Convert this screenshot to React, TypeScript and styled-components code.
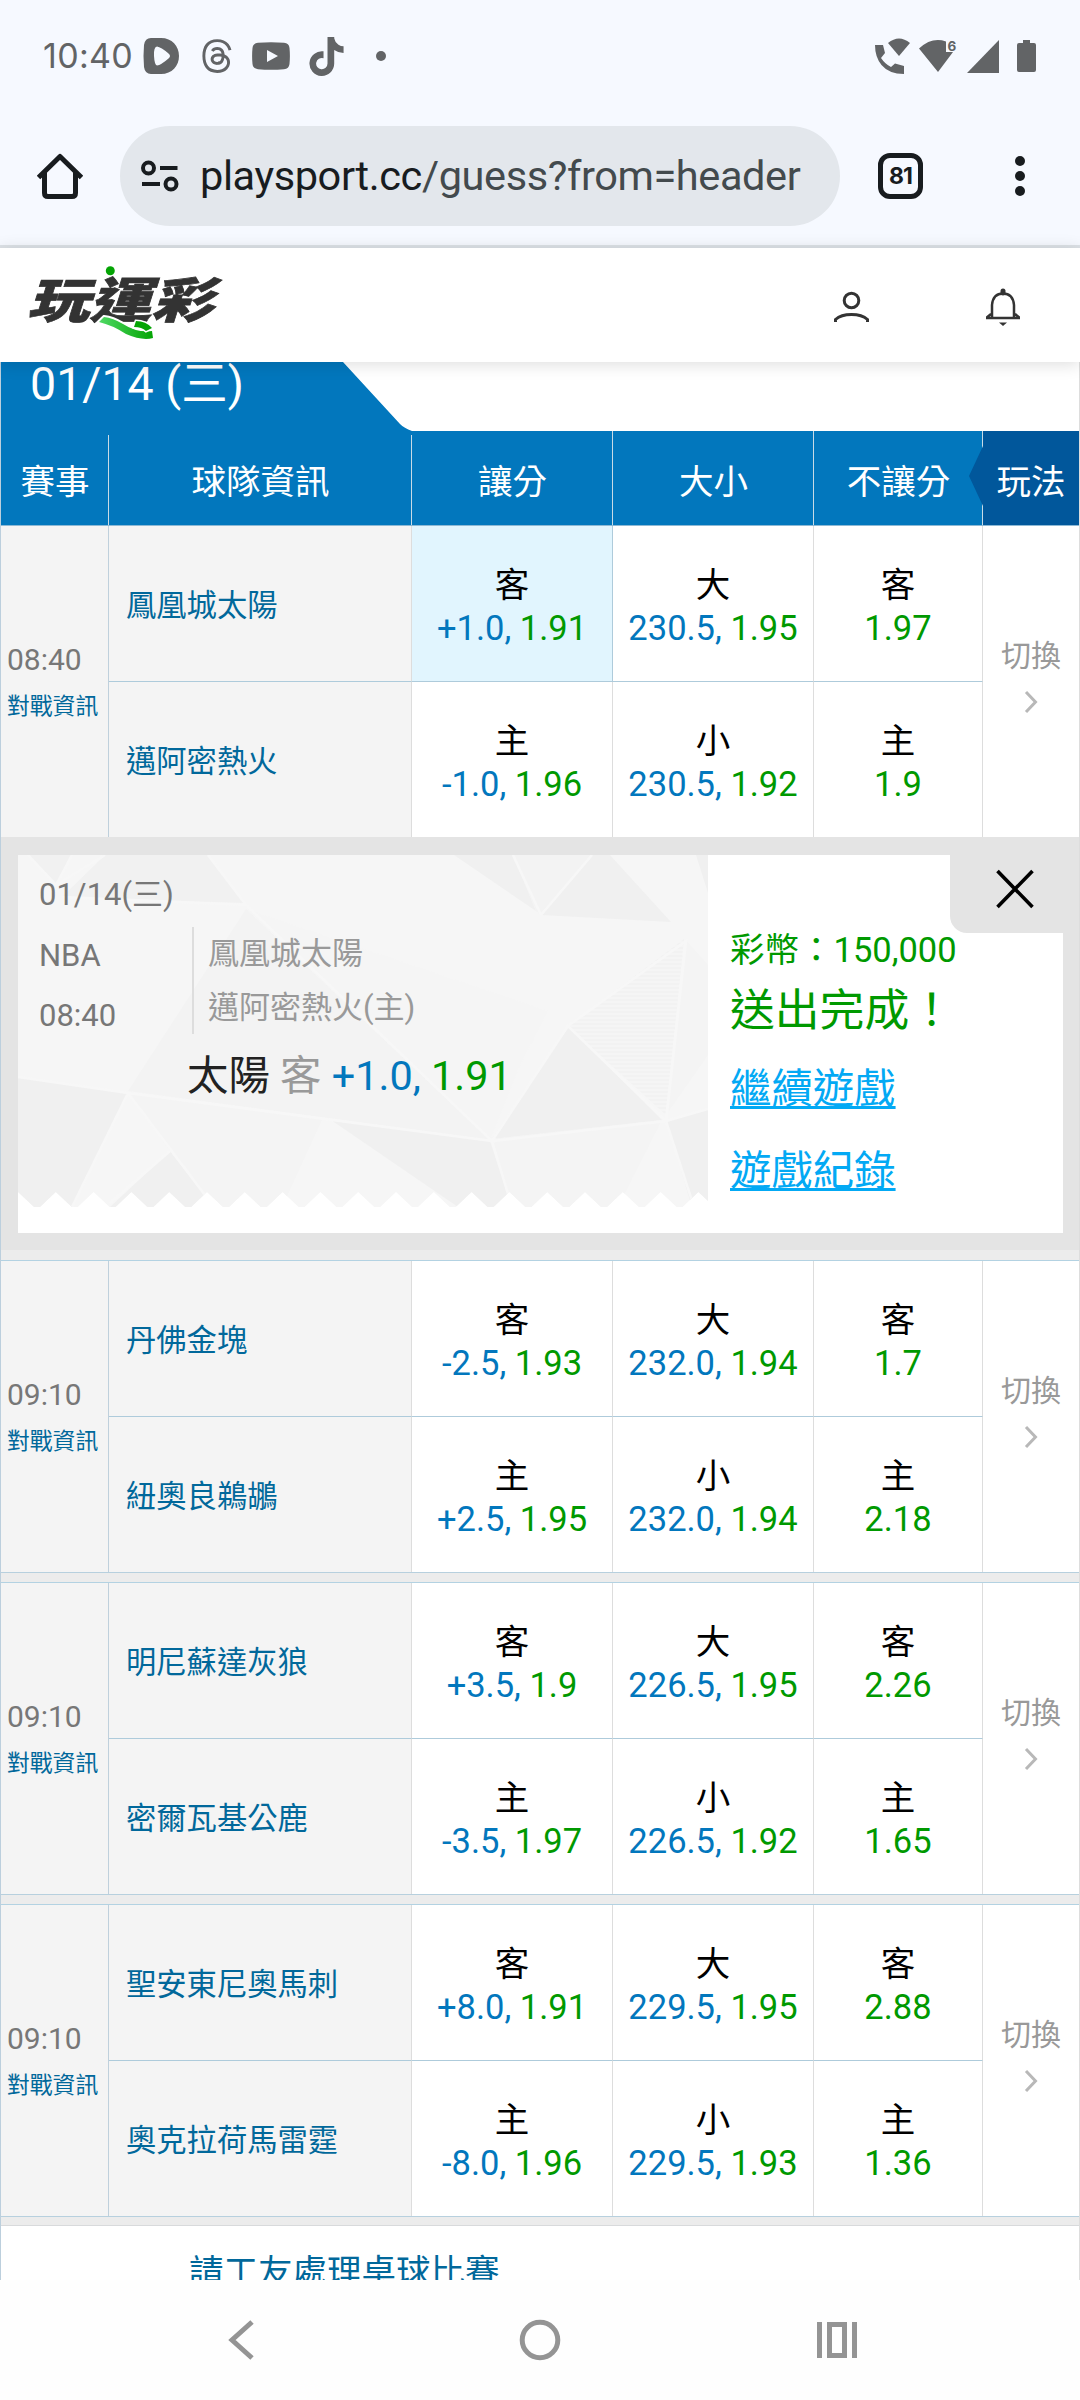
import React from 'react';
import styled, { createGlobalStyle, css } from 'styled-components';
import { FaThreads, FaTiktok } from 'react-icons/fa6';

const BLUE = '#0277bd';
const NAVY = '#01579b';
const GREEN = '#009900';

const Global = createGlobalStyle`
  *, *::before, *::after { box-sizing: border-box; }
  body { margin: 0; background: #fff; }
  svg { display: block; flex: none; }
`;

const Screen = styled.div`
  width: 1080px;
  height: 2400px;
  overflow: hidden;
  display: flex;
  flex-direction: column;
  background: #fff;
  font-family: Roboto, 'Noto Sans CJK TC', sans-serif;
`;

/* ---------- browser chrome ---------- */
const Chrome = styled.header`
  flex: none;
  height: 248px;
  background: #f6f9ff;
  border-bottom: 3px solid #dde2e7;
`;

const StatusBar = styled.div`
  height: 112px;
  padding: 0 44px 0 43px;
  display: flex;
  align-items: center;
  justify-content: space-between;
  color: #626466;
`;

const StatusGroup = styled.div`
  display: flex;
  align-items: center;
`;

const Clock = styled.span`
  width: 100px;
  font-family: Inter, Roboto, sans-serif;
  font-size: 34px;
  line-height: 40px;
  letter-spacing: 0.3px;
  color: #626466;
`;

const IconSlot = styled.span<{ $w: number }>`
  width: ${(p) => p.$w}px;
  flex: none;
  display: flex;
  align-items: center;
`;

const Toolbar = styled.div`
  height: 126px;
  margin-top: 1px;
  display: flex;
  align-items: center;
  padding-left: 37px;
  color: #181c1f;
`;

const Omnibox = styled.div`
  width: 720px;
  height: 100px;
  margin-left: 37px;
  padding-left: 21px;
  border-radius: 50px;
  display: flex;
  align-items: center;
  background: #e3e7ec;
`;

const Url = styled.span`
  margin-left: 21px;
  font-size: 41.5px;
  line-height: 50px;
  letter-spacing: -0.4px;
  color: #434a4d;
  white-space: nowrap;
`;

const Host = styled.span`
  color: #181c1f;
`;

const TabCount = styled.div`
  width: 45px;
  height: 46px;
  margin-left: 38px;
  border: 5px solid #181c1f;
  border-radius: 12px;
  display: flex;
  align-items: center;
  justify-content: center;
  font: 700 23px/26px Inter, sans-serif;
  letter-spacing: -1px;
`;

const MenuDots = styled.div`
  margin-left: 92px;
  display: flex;
  flex-direction: column;
  gap: 5px;
`;

const Dot = styled.i`
  width: 10px;
  height: 10px;
  border-radius: 50%;
  background: currentColor;
`;

/* ---------- site header ---------- */
const SiteHeader = styled.div`
  position: relative;
  z-index: 1;
  flex: none;
  height: 114px;
  padding: 4px 60px 0 28px;
  display: flex;
  align-items: center;
  background: #fff;
  box-shadow: 0 2px 16px rgba(0, 0, 0, 0.14);
`;

const Logo = styled.div`
  position: relative;
  width: 200px;
  height: 84px;
  margin: -4px auto 0 0;
  padding-top: 4px;
`;

const LogoText = styled.div`
  width: max-content;
  font: 900 50px/60px 'Noto Sans CJK TC', sans-serif;
  color: #333;
  -webkit-text-stroke: 0.7px #333;
  transform-origin: 0 50%;
  transform: translateX(6px) scale(1.24, 0.97) skewX(-14deg);
`;

const LogoMark = styled.svg`
  position: absolute;
  left: 0;
  top: 0;
`;

/* ---------- table ---------- */
const Board = styled.main`
  flex: none;
  height: 1918px;
  overflow: hidden;
  border-left: 1px solid #bccfdd;
  border-right: 1px solid #ddd;
`;

const DateTab = styled.div`
  height: 69px;
  padding-left: 29px;
  font-size: 46.5px;
  line-height: 44px;
  color: #fff;
  background: ${BLUE};
  clip-path: path('M0 0H342L399 62Q403 66 411 69V70H0Z');
`;

const columns = css`
  display: grid;
  grid-template-columns: 108px 303px 201px 201px 169px 96px;
`;

const HeadRow = styled.div`
  ${columns}
  height: 95px;
  background: ${BLUE};
  border-bottom: 1px solid #8db9d5;
`;

const Head = styled.div<{ $inset?: boolean; $play?: boolean }>`
  position: relative;
  display: flex;
  align-items: center;
  justify-content: center;
  padding-top: 1px;
  font-size: 34.5px;
  color: #fff;
  background: ${(p) => (p.$play ? NAVY : BLUE)};

  ${(p) =>
    !p.$play &&
    css`
      &::after {
        content: '';
        position: absolute;
        right: 0;
        top: ${p.$inset ? 4 : 0}px;
        bottom: 0;
        width: 1px;
        background: #c9dbe6;
      }
    `}

  ${(p) =>
    p.$play &&
    css`
      &::before {
        content: '';
        position: absolute;
        z-index: 1;
        left: -14px;
        top: 15px;
        border: solid transparent;
        border-width: 30px 14px 30px 0;
        border-right-color: ${NAVY};
      }
    `}
`;

const GameRow = styled.section<{ $first?: boolean }>`
  ${columns}
  grid-template-rows: 156px 155px;
  height: ${(p) => (p.$first ? 311 : 312)}px;
  border-top: ${(p) => (p.$first ? '0' : '1px solid #b3d2e2')};
`;

const Meta = styled.div`
  grid-row: span 2;
  padding: 117px 0 0 6px;
  background: #f4f4f4;
  border-right: 1px solid #bfd0dc;
  white-space: nowrap;
`;

const Time = styled.div`
  font-size: 30px;
  line-height: 34px;
  color: #777;
`;

const Matchup = styled.a`
  display: block;
  margin-top: 16px;
  font-size: 22.8px;
  line-height: 28px;
  color: #01689b;
`;

const Team = styled.a<{ $last?: boolean }>`
  padding: 0 0 1px 17px;
  display: flex;
  align-items: center;
  font-size: 30.3px;
  color: #01689b;
  background: #f4f4f4;
  border-right: 1px solid #ddd;
  border-bottom: ${(p) => (p.$last ? '0' : '1px solid #aecbdb')};
`;

const Odd = styled.div<{ $last?: boolean; $on?: boolean }>`
  padding-top: 38px;
  text-align: center;
  font-size: 34.5px;
  line-height: 43px;
  color: #000;
  white-space: nowrap;
  background: ${(p) => (p.$on ? '#e1f5fe' : '#fff')};
  border-right: 1px solid ${(p) => (p.$on ? '#aecbdb' : '#ddd')};
  border-bottom: ${(p) => (p.$last ? '0' : '1px solid #aecbdb')};
`;

const Handicap = styled.span`
  color: ${BLUE};
`;

const Rate = styled.span`
  color: ${GREEN};
`;

const Switch = styled.button`
  grid-column: 6;
  grid-row: 1 / span 2;
  margin: 0;
  padding: 112px 0 0;
  border: 0;
  display: flex;
  flex-direction: column;
  align-items: center;
  justify-content: flex-start;
  gap: 16px;
  background: #fff;
  font: 30px/36px Roboto, 'Noto Sans CJK TC', sans-serif;
  color: #999;
`;

const Gap = styled.div<{ $plain?: boolean }>`
  height: 10px;
  background: #ececec;
  border-top: ${(p) => (p.$plain ? '0' : '1px solid #b7d0de')};
`;

/* ---------- bet slip ---------- */
const SlipWrap = styled.div`
  height: 413px;
  padding: 18px 16px 17px 17px;
  background: #e4e4e4;
`;

const Slip = styled.div`
  position: relative;
  height: 378px;
  display: flex;
  background: #fff;
`;

const Ticket = styled.div`
  position: relative;
  flex: none;
  width: 690px;
  height: 352px;
`;

const TicketArt = styled.svg`
  position: absolute;
  inset: 0;
`;

const TicketBody = styled.div`
  position: relative;
  display: grid;
  grid-template-columns: 153px 1fr;
  padding: 20px 0 0 21px;
`;

const TicketInfo = styled.div`
  font-size: 31px;
  line-height: 40px;
  color: #777;
  display: flex;
  flex-direction: column;
  gap: 20.5px;
  white-space: nowrap;
`;

const TicketTeams = styled.div`
  height: 107px;
  margin-top: 52px;
  padding-left: 14px;
  border-left: 2px solid #ddd;
  font-size: 31px;
  line-height: 54px;
  color: #999;
`;

const Pick = styled.div`
  grid-column: 1 / -1;
  margin: 15px 0 0 148px;
  font-size: 41.4px;
  line-height: 50px;
  color: #222;
  white-space: nowrap;
`;

const Side = styled.span`
  color: #999;
`;

const Result = styled.div`
  padding: 73px 0 0 22px;
  color: ${GREEN};
  white-space: nowrap;
`;

const Coins = styled.div`
  font-size: 34.5px;
  line-height: 44px;
`;

const Done = styled.div`
  margin-top: 11px;
  font-size: 44.8px;
  line-height: 56px;
`;

const SlipLink = styled.a`
  display: block;
  margin-bottom: 26px;
  font-size: 41.4px;
  line-height: 56px;
  color: #03a9f4;
  text-decoration: underline;
  text-decoration-thickness: 3px;
  text-underline-offset: 3px;
  text-decoration-skip-ink: none;
`;

const Links = styled.div`
  margin-top: 22px;
`;

const Close = styled.button`
  position: absolute;
  top: 0;
  right: 0;
  width: 113px;
  height: 78px;
  padding: 0 0 10px 16px;
  border: 0;
  border-bottom-left-radius: 17px;
  display: flex;
  align-items: center;
  justify-content: center;
  background: #e4e4e4;
`;

const Request = styled.a`
  display: block;
  height: 100px;
  padding: 23px 0 0 188px;
  border-top: 1px solid #d8dadc;
  margin-top: -1px;
  font-size: 34.5px;
  line-height: 46px;
  color: #01689b;
`;

const NavBar = styled.nav`
  flex: none;
  height: 120px;
  padding: 0 223px 0 228px;
  display: grid;
  grid-template-columns: 291px 1fr auto;
  align-items: center;
  background: #fefefe;
`;

type Cell = { side: string; line?: string; rate: string };
type Game = { time: string; away: string; home: string; odds: Cell[]; picked?: number };

const game = (time: string, away: string, home: string, v: string[], picked?: number): Game => ({
  time,
  away,
  home,
  picked,
  odds: [
    { side: '客', line: v[0], rate: v[1] },
    { side: '大', line: v[2], rate: v[3] },
    { side: '客', rate: v[4] },
    { side: '主', line: v[5], rate: v[6] },
    { side: '小', line: v[2], rate: v[7] },
    { side: '主', rate: v[8] },
  ],
});

const games: Game[] = [
  game('08:40', '鳳凰城太陽', '邁阿密熱火', ['+1.0', '1.91', '230.5', '1.95', '1.97', '-1.0', '1.96', '1.92', '1.9'], 0),
  game('09:10', '丹佛金塊', '紐奧良鵜鶘', ['-2.5', '1.93', '232.0', '1.94', '1.7', '+2.5', '1.95', '1.94', '2.18']),
  game('09:10', '明尼蘇達灰狼', '密爾瓦基公鹿', ['+3.5', '1.9', '226.5', '1.95', '2.26', '-3.5', '1.97', '1.92', '1.65']),
  game('09:10', '聖安東尼奧馬刺', '奧克拉荷馬雷霆', ['+8.0', '1.91', '229.5', '1.95', '2.88', '-8.0', '1.96', '1.93', '1.36']),
];

const OddCell = ({ cell, last, on }: { cell: Cell; last?: boolean; on?: boolean }) => (
  <Odd $last={last} $on={on}>
    <div>{cell.side}</div>
    {cell.line && <Handicap>{cell.line}, </Handicap>}
    <Rate>{cell.rate}</Rate>
  </Odd>
);

const GameBlock = ({ g, first }: { g: Game; first?: boolean }) => (
  <GameRow $first={first}>
    <Meta>
      <Time>{g.time}</Time>
      <Matchup>對戰資訊</Matchup>
    </Meta>
    <Team>{g.away}</Team>
    {g.odds.slice(0, 3).map((c, i) => (
      <OddCell key={i} cell={c} on={g.picked === i} />
    ))}
    <Switch>
      切換
      <svg width="14" height="24" viewBox="0 0 14 24" fill="none" stroke="#b8b8b8" strokeWidth="3">
        <path d="M2 2l9.500 10L2 22" />
      </svg>
    </Switch>
    <Team $last>{g.home}</Team>
    {g.odds.slice(3).map((c, i) => (
      <OddCell key={i} cell={c} last />
    ))}
  </GameRow>
);

/* outline of the ticket: a straight rectangle with a torn, toothed lower edge */
const TOOTH = 37.8;
const tornEdge = Array.from({ length: 19 }, (_, i) => 18 - i)
  .map((i) => {
    const x = i * TOOTH;
    return `L${(x + 22).toFixed(1)} 352L${(x + 16).toFixed(1)} 352L${x.toFixed(1)} 337`;
  })
  .join('');
const ticketOutline = `M0 0H690V345${tornEdge}Z`;

const TicketBackground = () => (
  <TicketArt width="690" height="352" viewBox="0 0 690 352">
    <defs>
      <clipPath id="tear">
        <path d={ticketOutline} />
      </clipPath>
      <pattern id="hatch" width="4" height="4" patternUnits="userSpaceOnUse">
        <path d="M0 1H4" stroke="#efefef" strokeWidth="1" />
      </pattern>
    </defs>
    <g clipPath="url(#tear)">
      <path fill="#f6f6f6" d="M0 0H690V352H0Z" />
      <path fill="#f1f1f1" d="M10 0H54L38 28ZM87 0H190L226 48L44 42Z" />
      <path fill="#f3f3f3" d="M228 54L472 285L110 236Z" />
      <path fill="#f0f0f0" d="M0 222L110 238L54 352H0ZM152 296L186 340L196 352H92Z" />
      <path fill="#f4f4f4" d="M110 238L305 263L264 352H196L152 296Z" />
      <path fill="#f0f0f0" d="M313 265L472 286L494 352H440Z" />
      <path fill="#f0f0f0" d="M436 0H495L518 56ZM574 0H592L653 67L523 60Z" />
      <path fill="#f3f3f3" d="M495 0H574L523 60L518 56Z" />
      <path fill="#f0f0f0" d="M474 284L550 171L644 265ZM648 266L690 254V352H674Z" />
      <path fill="#f4f4f4" d="M474 284L644 265L600 352H494ZM668 85L690 110V200L648 260Z" />
      <path fill="#f5f5f5" d="M550 171L666 84L648 260Z" />
      <path fill="url(#hatch)" d="M550 171L666 84L648 260Z" />
      <path fill="#f0f0f0" d="M678 0H690V38Z" />
      <path fill="#f5f5f5" d="M228 54L530 156L500 215L472 285Z" opacity=".6" />
      <g fill="none" stroke="#f7f7f7" strokeWidth="2.500">
        <path d="M10 0L38 30L54 0M87 0L38 30M190 0L228 50L44 42M228 50L474 286L110 238L54 352M110 238L196 352M152 296L92 348M0 222L110 238" />
        <path d="M495 0L523 60M574 0L523 60M474 286L550 171L648 266L474 286L494 352M648 266L690 254M648 266L668 86L550 171M648 266L676 352" />
      </g>
    </g>
  </TicketArt>
);

const App = () => (
  <Screen>
    <Global />
    <Chrome>
      <StatusBar>
        <StatusGroup>
          <Clock>10:40</Clock>
          <IconSlot $w={56}>
            <svg width="37" height="36" viewBox="0 0 37 36">
              <path fill="currentColor" fillRule="evenodd" d="M8 0H18C29 0 36 8 36 18S29 36 18 36H8Q2 36 1 29Q0 18 1 7Q2 0 8 0ZM14 8.500Q10.500 9 11 18T14 27.500Q18 27 25.500 20.500Q28.500 18 25.500 15.500Q18 9 14 8.500Z" />
            </svg>
          </IconSlot>
          <IconSlot $w={53}>
            <FaThreads size={36} />
          </IconSlot>
          <IconSlot $w={55}>
            <svg width="38" height="28" viewBox="0 0 38 28">
              <path fill="currentColor" fillRule="evenodd" d="M6 .8Q19-.5 32 .8Q37 1.200 37.500 6Q38.300 14 37.500 22Q37 26.800 32 27.200Q19 28.500 6 27.200Q1 26.800 .5 22Q-.3 14 .5 6Q1 1.200 6 .8ZM15 8V20L26 14Z" />
            </svg>
          </IconSlot>
          <IconSlot $w={69}>
            <FaTiktok size={39} />
          </IconSlot>
          <Dot />
        </StatusGroup>
        <StatusGroup>
          <IconSlot $w={44}>
            <svg width="35" height="36" viewBox="0 0 35 36" fill="currentColor">
              <path d="M0 7H8L10 15L6 20Q10 26 16 29L20 25.500L29 28V36Q14 36 6.500 27Q0 19 0 7Z" />
              <path d="M13 5Q24-4 35 5L24 18Z" />
            </svg>
          </IconSlot>
          <IconSlot $w={48}>
            <svg width="38" height="34" viewBox="0 0 38 34" fill="currentColor">
              <path d="M0 9.500Q13-2.500 27 2.500V13H34L19 33Z" />
              <text x="28.500" y="11.500" fontFamily="Inter, sans-serif" fontSize="13.500" fontWeight="700">6</text>
            </svg>
          </IconSlot>
          <IconSlot $w={50}>
            <svg width="32" height="33" viewBox="0 0 32 33" fill="currentColor">
              <path d="M32 0V33H0Z" />
            </svg>
          </IconSlot>
          <svg width="19" height="32" viewBox="0 0 19 32" fill="currentColor">
            <path d="M6 0H13V3H17Q19 3 19 5V30Q19 32 17 32H2Q0 32 0 30V5Q0 3 2 3H6Z" />
          </svg>
        </StatusGroup>
      </StatusBar>
      <Toolbar>
        <svg width="46" height="46" viewBox="0 0 46 46" fill="none" stroke="currentColor" strokeWidth="5">
          <path d="M1.500 24.500L23 3.500L44.500 24.500M7.500 19V40Q7.500 43.500 11 43.500H35Q38.500 43.500 38.500 40V19" strokeLinejoin="round" />
        </svg>
        <Omnibox>
          <svg width="38" height="32" viewBox="0 0 38 32" fill="none" stroke="currentColor" strokeWidth="4">
            <circle cx="7.500" cy="8" r="5.500" />
            <circle cx="30" cy="24" r="5.500" />
            <path d="M19 8H36.500M1 24H19" />
          </svg>
          <Url>
            <Host>playsport.cc</Host>/guess?from=header
          </Url>
        </Omnibox>
        <TabCount>81</TabCount>
        <MenuDots>
          <Dot />
          <Dot />
          <Dot />
        </MenuDots>
      </Toolbar>
    </Chrome>

    <SiteHeader>
      <Logo>
        <LogoText>玩運彩</LogoText>
        <LogoMark width="200" height="84" viewBox="28 263 200 84">
          <defs>
            <linearGradient id="ribbon" x1="0" x2="1">
              <stop offset="0" stopColor="#4fd964" />
              <stop offset="1" stopColor="#04a404" />
            </linearGradient>
          </defs>
          <circle cx="110.300" cy="270.800" r="4.500" fill="#04a404" />
          <path d="M99 322L104 317Q113 318 123 324Q137 333 152 331L153 338Q142 341 126 334Q112 325 99 322Z" fill="url(#ribbon)" stroke="#fff" strokeWidth="4" paintOrder="stroke" />
          <path d="M136 321Q146 321 152 328L146 331Q142 327 134 327Z" fill="#04a404" stroke="#fff" strokeWidth="3" paintOrder="stroke" />
        </LogoMark>
      </Logo>
      <IconSlot $w={152}>
        <svg width="35" height="32" viewBox="0 0 35 32" fill="none" stroke="#333" strokeWidth="3">
          <circle cx="17.500" cy="9.500" r="7.300" />
          <path d="M1.500 31V28.500Q7 23.500 17.500 23.500T33.500 28.500V31" />
        </svg>
      </IconSlot>
      <svg width="34" height="38" viewBox="0 0 34 38" fill="none" stroke="#333" strokeWidth="2.500">
        <path d="M0 30H34L29 26M5 26L0 30M6 29V17Q7 5.500 17 5.500T28 17V29" />
        <path d="M17 3V5" strokeWidth="5" strokeLinecap="round" />
        <path d="M13 34.500H21L17 38Z" fill="#333" stroke="none" />
      </svg>
    </SiteHeader>

    <Board>
      <DateTab>01/14 (三)</DateTab>
      <HeadRow>
        <Head $inset>賽事</Head>
        <Head $inset>球隊資訊</Head>
        <Head>讓分</Head>
        <Head>大小</Head>
        <Head>不讓分</Head>
        <Head $play>玩法</Head>
      </HeadRow>

      <GameBlock g={games[0]} first />
      <SlipWrap>
        <Slip>
          <Ticket>
            <TicketBackground />
            <TicketBody>
              <TicketInfo>
                <span>01/14(三)</span>
                <span>NBA</span>
                <span>08:40</span>
              </TicketInfo>
              <TicketTeams>
                <div>鳳凰城太陽</div>
                <div>邁阿密熱火(主)</div>
              </TicketTeams>
              <Pick>
                太陽 <Side>客</Side> <Handicap>+1.0,</Handicap> <Rate>1.91</Rate>
              </Pick>
            </TicketBody>
          </Ticket>
          <Result>
            <Coins>彩幣：150,000</Coins>
            <Done>送出完成！</Done>
            <Links>
              <SlipLink>繼續遊戲</SlipLink>
              <SlipLink>遊戲紀錄</SlipLink>
            </Links>
          </Result>
          <Close aria-label="close">
            <svg width="38" height="40" viewBox="0 0 38 40" fill="none" stroke="#000" strokeWidth="3.600">
              <path d="M1.500 2L36.500 38M36.500 2L1.500 38" />
            </svg>
          </Close>
        </Slip>
      </SlipWrap>
      <Gap $plain />

      {games.slice(1).map((g) => (
        <React.Fragment key={g.away}>
          <GameBlock g={g} />
          <Gap />
        </React.Fragment>
      ))}
      <Request>請工友處理桌球比賽</Request>
    </Board>

    <NavBar>
      <svg width="27" height="40" viewBox="0 0 27 40" fill="none" stroke="#949494" strokeWidth="5">
        <path d="M24 2L4 20L24 38" />
      </svg>
      <svg width="42" height="42" viewBox="0 0 42 42" fill="none" stroke="#949494" strokeWidth="5">
        <circle cx="21" cy="21" r="17.800" />
      </svg>
      <svg width="40" height="36" viewBox="0 0 40 36" fill="none" stroke="#949494" strokeWidth="5">
        <path d="M2.500 0V36M37.500 0V36M12.500 2.500H27.500V33.500H12.500Z" />
      </svg>
    </NavBar>
  </Screen>
);

export default App;
